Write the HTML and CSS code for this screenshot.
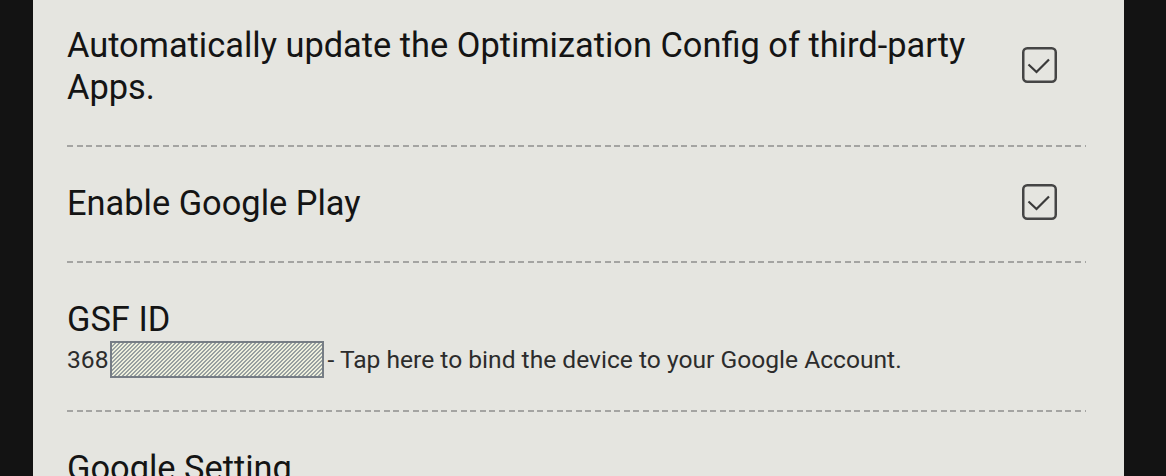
FILE: index.html
```html
<!DOCTYPE html>
<html>
<head>
<meta charset="utf-8">
<link rel="stylesheet" href="styles.css">
</head>
<body>
<div class="panel">
  <div class="item item-first">
    <div class="title">Automatically update the Optimization Config of third-party Apps.</div>
    <svg class="check" width="35" height="36" viewBox="0 0 35 36"><rect x="1.25" y="1.25" width="32.5" height="33.5" rx="4" fill="none" stroke="#454545" stroke-width="2.5"/><path d="M6.5 17.5 L14.5 25 L27 12.5" fill="none" stroke="#3a3a3a" stroke-width="2.2"/></svg>
  </div>
  <div class="divider"></div>
  <div class="item item-second">
    <div class="title">Enable Google Play</div>
    <svg class="check" width="35" height="36" viewBox="0 0 35 36"><rect x="1.25" y="1.25" width="32.5" height="33.5" rx="4" fill="none" stroke="#454545" stroke-width="2.5"/><path d="M6.5 17.5 L14.5 25 L27 12.5" fill="none" stroke="#3a3a3a" stroke-width="2.2"/></svg>
  </div>
  <div class="divider"></div>
  <div class="item item-third">
    <div class="stack">
      <div class="title">GSF ID</div>
      <div class="sub"><span>368</span><span class="redact"></span><span>- Tap here to bind the device to your Google Account.</span></div>
    </div>
  </div>
  <div class="divider"></div>
  <div class="item item-fourth">
    <div class="title">Google Setting</div>
  </div>
</div>
</body>
</html>
```
FILE: styles.css
```css
html, body {
  margin: 0;
  padding: 0;
  height: 476px;
  overflow: hidden;
  background: #131313;
}
.panel {
  margin-left: 33px;
  width: 1091px;
  height: 476px;
  box-sizing: border-box;
  padding: 0 38px 0 34px;
  background: #e5e5e0;
  font-family: Roboto, "Liberation Sans", sans-serif;
  color: #141414;
  overflow: hidden;
}
.item {
  display: flex;
  align-items: center;
  justify-content: space-between;
}
.title {
  font-size: 34.4px;
  line-height: 42px;
}
.item-first {
  height: 145px;
}
.item-first .title {
  width: 940px;
  margin-top: -13px;
}
.item-first .check {
  margin-top: -16px;
}
.item-second {
  height: 114px;
}
.item-second .title {
  margin-top: -3px;
}
.item-second .check {
  margin-top: -4px;
}
.item-third {
  height: 147px;
  align-items: flex-start;
}
.stack {
  padding-top: 35px;
  display: flex;
  flex-direction: column;
}
.sub {
  display: flex;
  align-items: center;
  font-size: 24.6px;
  color: #2c2c2c;
  height: 38px;
}
.redact {
  width: 214px;
  height: 37px;
  box-sizing: border-box;
  margin: 0 3px 0 2px;
  border: 2px solid #767d85;
  background: repeating-linear-gradient(135deg, #eef0dd 0 1.6px, #98a0a1 1.6px 2.83px);
}
.item-fourth {
  padding-top: 35px;
}
.check {
  flex: none;
  margin-right: 29px;
  display: block;
}
.divider {
  height: 2px;
  background: repeating-linear-gradient(90deg, #a4a4a2 0 6px, transparent 6px 9.6px);
}
```
